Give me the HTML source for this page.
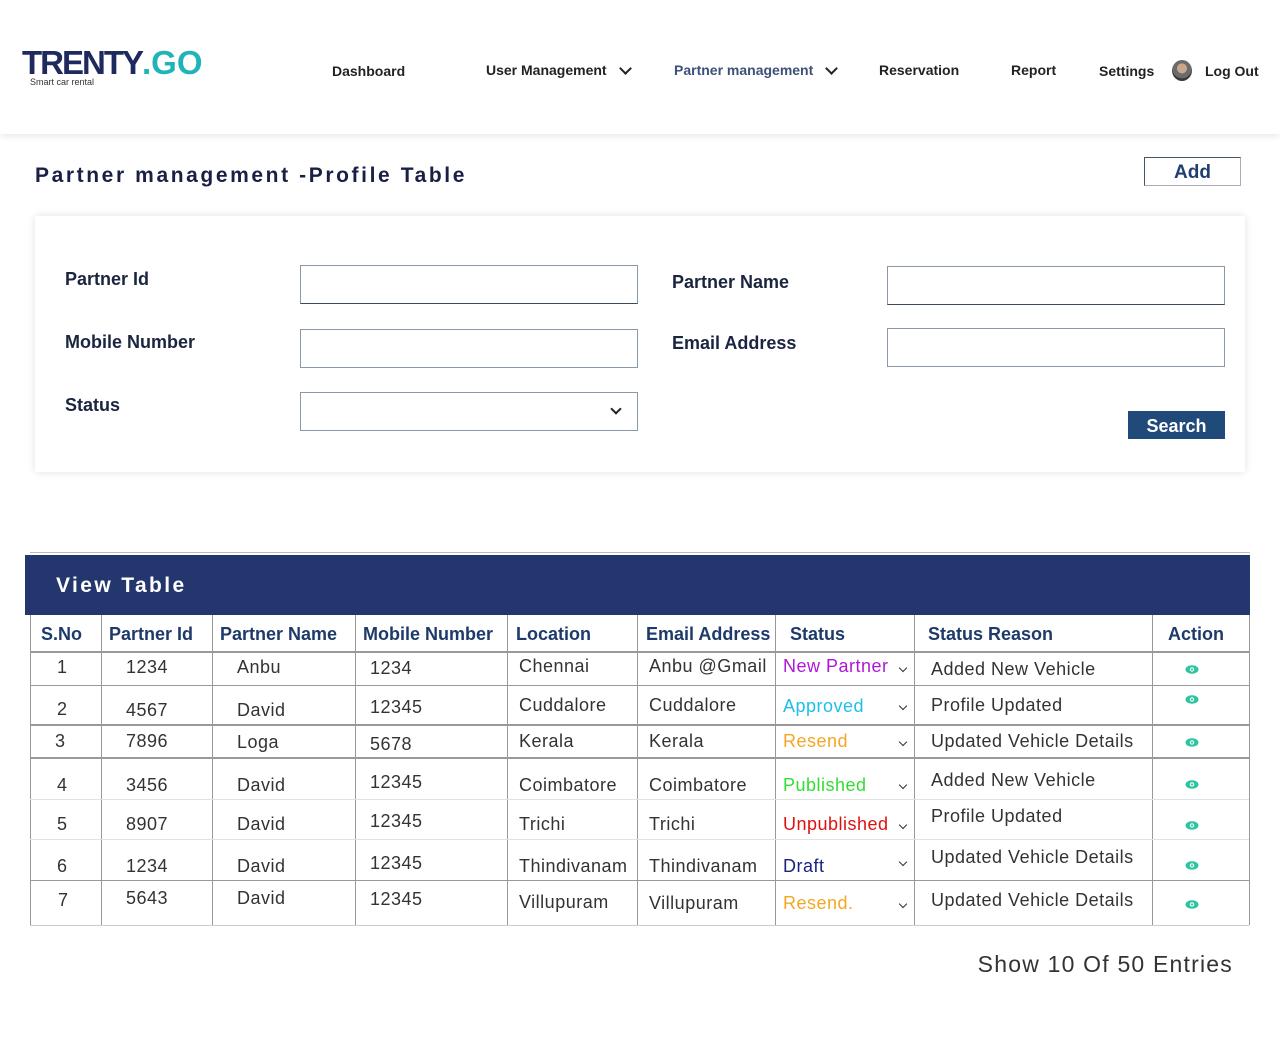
<!DOCTYPE html>
<html><head><meta charset="utf-8"><style>
body{margin:0;width:1280px;height:1040px;position:relative;background:#fff;font-family:"Liberation Sans",sans-serif;overflow:hidden}
.a{position:absolute;white-space:nowrap}
.hdr{position:absolute;left:0;top:0;width:1280px;height:134px;background:#fff;box-shadow:0 3px 6px rgba(0,0,0,0.08)}
.nav{position:absolute;font-size:14px;font-weight:bold;color:#222;line-height:16px}
.chev{display:inline-block;width:7px;height:7px;border-right:2px solid #222;border-bottom:2px solid #222;transform:rotate(45deg);position:absolute}
.lbl{position:absolute;font-size:18px;font-weight:bold;color:#1a2540;line-height:20px}
.inp{position:absolute;width:336px;height:37px;border:1px solid #8a99a8;background:#fff}
.h{position:absolute;font-size:18px;font-weight:bold;color:#1e3a6b;line-height:20px;top:624px}
.t{position:absolute;font-size:18px;color:#333;line-height:20px;white-space:nowrap;letter-spacing:0.5px}
.vl{position:absolute;width:1px;background:#999;top:615px;height:310px}
.hl{position:absolute;left:30px;width:1219px;height:1px;background:#999}
.sc{position:absolute;width:5px;height:5px;border-right:1.5px solid #333;border-bottom:1.5px solid #333;transform:rotate(45deg);left:900px}
.eye{position:absolute;left:1185px;width:14px;height:9px}
</style></head><body>
<div class="hdr"></div>
<div class="a" style="left:22px;top:44px;font-size:33px;font-weight:bold;letter-spacing:-2px;color:#1e2a5e">TRENTY<span style="color:#1fb5b8;letter-spacing:0px">.GO</span></div>
<div class="a" style="left:30px;top:77px;font-size:9px;color:#333">Smart car rental</div>
<div class="nav" style="left:332px;top:63px">Dashboard</div>
<div class="nav" style="left:486px;top:62px">User Management</div>
<span class="chev" style="left:621px;top:64px"></span>
<div class="nav" style="left:674px;top:62px;color:#3c5078">Partner management</div>
<span class="chev" style="left:827px;top:64px"></span>
<div class="nav" style="left:879px;top:62px">Reservation</div>
<div class="nav" style="left:1011px;top:62px">Report</div>
<div class="nav" style="left:1099px;top:63px">Settings</div>
<div class="a" style="left:1172px;top:60px;width:20px;height:21px;border-radius:50%;background:radial-gradient(circle at 50% 40%,#c9a58c 0 30%,#6b6b6b 32% 60%,#3a3a3a 62%)"></div>
<div class="nav" style="left:1205px;top:63px">Log Out</div>

<div class="a" style="left:35px;top:164px;font-size:21px;font-weight:bold;letter-spacing:2.6px;color:#1a1f45">Partner management -Profile Table</div>
<div class="a" style="left:1144px;top:157px;width:95px;height:27px;border:1px solid #445566;border-right-color:#aab;border-bottom-color:#aab;text-align:center;font-size:19px;font-weight:bold;color:#1f3f6e;line-height:30px">Add</div>

<div class="a" style="left:35px;top:216px;width:1210px;height:256px;background:#fff;box-shadow:0 0 8px rgba(0,0,0,0.12)"></div>
<div class="lbl" style="left:65px;top:269px">Partner Id</div>
<div class="lbl" style="left:65px;top:332px">Mobile Number</div>
<div class="lbl" style="left:65px;top:395px">Status</div>
<div class="lbl" style="left:672px;top:272px">Partner Name</div>
<div class="lbl" style="left:672px;top:333px">Email Address</div>
<div class="inp" style="left:300px;top:265px;border-bottom-color:#3a4a5a"></div>
<div class="inp" style="left:300px;top:329px"></div>
<div class="inp" style="left:300px;top:392px"></div>
<span class="chev" style="left:612px;top:405px;width:6px;height:6px"></span>
<div class="inp" style="left:887px;top:266px;border-bottom-color:#3a4a5a"></div>
<div class="inp" style="left:887px;top:328px"></div>
<div class="a" style="left:1128px;top:411px;width:97px;height:28px;background:#1f4a7a;color:#fff;font-size:18px;font-weight:bold;text-align:center;line-height:31px">Search</div>

<div class="a" style="left:30px;top:552px;width:1220px;height:1px;background:#bbb"></div>
<div class="a" style="left:25px;top:555px;width:1225px;height:60px;background:#24366e"></div>
<div class="a" style="left:56px;top:574px;font-size:21px;font-weight:bold;letter-spacing:2.4px;color:#fff">View Table</div>

<div class="vl" style="left:30px"></div><div class="vl" style="left:101px"></div><div class="vl" style="left:212px"></div><div class="vl" style="left:355px"></div><div class="vl" style="left:507px"></div><div class="vl" style="left:637px"></div><div class="vl" style="left:775px"></div><div class="vl" style="left:914px"></div><div class="vl" style="left:1152px"></div><div class="vl" style="left:1249px"></div>
<div class="hl" style="top:651px;height:2px"></div>
<div class="hl" style="top:685px"></div>
<div class="hl" style="top:724px;height:2px"></div>
<div class="hl" style="top:757px;height:2px"></div>
<div class="hl" style="top:799px;background:#e2e2e2"></div>
<div class="hl" style="top:839px;background:#e2e2e2"></div>
<div class="hl" style="top:880px"></div>
<div class="hl" style="top:925px;background:#ccc"></div>

<div class="h" style="left:41px">S.No</div>
<div class="h" style="left:109px">Partner Id</div>
<div class="h" style="left:220px">Partner Name</div>
<div class="h" style="left:363px">Mobile Number</div>
<div class="h" style="left:516px">Location</div>
<div class="h" style="left:646px">Email Address</div>
<div class="h" style="left:790px">Status</div>
<div class="h" style="left:928px">Status Reason</div>
<div class="h" style="left:1168px">Action</div>

<div class="t" style="left:57px;top:657px">1</div><div class="t" style="left:126px;top:657px">1234</div><div class="t" style="left:237px;top:657px">Anbu</div><div class="t" style="left:370px;top:658px">1234</div><div class="t" style="left:519px;top:656px">Chennai</div><div class="t" style="left:649px;top:656px">Anbu @Gmail</div><div class="t" style="left:783px;top:656px;color:#b016d8">New Partner</div><span class="sc" style="top:665px"></span><div class="t" style="left:931px;top:659px">Added New Vehicle</div>
<div class="t" style="left:57px;top:699px">2</div><div class="t" style="left:126px;top:700px">4567</div><div class="t" style="left:237px;top:700px">David</div><div class="t" style="left:370px;top:697px">12345</div><div class="t" style="left:519px;top:695px">Cuddalore</div><div class="t" style="left:649px;top:695px">Cuddalore</div><div class="t" style="left:783px;top:696px;color:#1ec0e8">Approved</div><span class="sc" style="top:703px"></span><div class="t" style="left:931px;top:695px">Profile Updated</div>
<div class="t" style="left:55px;top:731px">3</div><div class="t" style="left:126px;top:731px">7896</div><div class="t" style="left:237px;top:732px">Loga</div><div class="t" style="left:370px;top:734px">5678</div><div class="t" style="left:519px;top:731px">Kerala</div><div class="t" style="left:649px;top:731px">Kerala</div><div class="t" style="left:783px;top:731px;color:#f5a623">Resend</div><span class="sc" style="top:739px"></span><div class="t" style="left:931px;top:731px">Updated Vehicle Details</div>
<div class="t" style="left:57px;top:775px">4</div><div class="t" style="left:126px;top:775px">3456</div><div class="t" style="left:237px;top:775px">David</div><div class="t" style="left:370px;top:772px">12345</div><div class="t" style="left:519px;top:775px">Coimbatore</div><div class="t" style="left:649px;top:775px">Coimbatore</div><div class="t" style="left:783px;top:775px;color:#33dd33">Published</div><span class="sc" style="top:782px"></span><div class="t" style="left:931px;top:770px">Added New Vehicle</div>
<div class="t" style="left:57px;top:814px">5</div><div class="t" style="left:126px;top:814px">8907</div><div class="t" style="left:237px;top:814px">David</div><div class="t" style="left:370px;top:811px">12345</div><div class="t" style="left:519px;top:814px">Trichi</div><div class="t" style="left:649px;top:814px">Trichi</div><div class="t" style="left:783px;top:814px;color:#e01010">Unpublished</div><span class="sc" style="top:822px"></span><div class="t" style="left:931px;top:806px">Profile Updated</div>
<div class="t" style="left:57px;top:856px">6</div><div class="t" style="left:126px;top:856px">1234</div><div class="t" style="left:237px;top:856px">David</div><div class="t" style="left:370px;top:853px">12345</div><div class="t" style="left:519px;top:856px">Thindivanam</div><div class="t" style="left:649px;top:856px">Thindivanam</div><div class="t" style="left:783px;top:856px;color:#1a237e">Draft</div><span class="sc" style="top:859px"></span><div class="t" style="left:931px;top:847px">Updated Vehicle Details</div>
<div class="t" style="left:58px;top:890px">7</div><div class="t" style="left:126px;top:888px">5643</div><div class="t" style="left:237px;top:888px">David</div><div class="t" style="left:370px;top:889px">12345</div><div class="t" style="left:519px;top:892px">Villupuram</div><div class="t" style="left:649px;top:893px">Villupuram</div><div class="t" style="left:783px;top:893px;color:#f5a623">Resend.</div><span class="sc" style="top:901px"></span><div class="t" style="left:931px;top:890px">Updated Vehicle Details</div>

<svg class="eye" style="top:665px" viewBox="0 0 14 9"><ellipse cx="7" cy="4.5" rx="6.5" ry="4.2" fill="#2ec4a0"/><circle cx="7" cy="4.5" r="2.2" fill="#fff"/><circle cx="7" cy="4.5" r="1.1" fill="#2ec4a0"/></svg>
<svg class="eye" style="top:695px" viewBox="0 0 14 9"><ellipse cx="7" cy="4.5" rx="6.5" ry="4.2" fill="#2ec4a0"/><circle cx="7" cy="4.5" r="2.2" fill="#fff"/><circle cx="7" cy="4.5" r="1.1" fill="#2ec4a0"/></svg>
<svg class="eye" style="top:738px" viewBox="0 0 14 9"><ellipse cx="7" cy="4.5" rx="6.5" ry="4.2" fill="#2ec4a0"/><circle cx="7" cy="4.5" r="2.2" fill="#fff"/><circle cx="7" cy="4.5" r="1.1" fill="#2ec4a0"/></svg>
<svg class="eye" style="top:780px" viewBox="0 0 14 9"><ellipse cx="7" cy="4.5" rx="6.5" ry="4.2" fill="#2ec4a0"/><circle cx="7" cy="4.5" r="2.2" fill="#fff"/><circle cx="7" cy="4.5" r="1.1" fill="#2ec4a0"/></svg>
<svg class="eye" style="top:821px" viewBox="0 0 14 9"><ellipse cx="7" cy="4.5" rx="6.5" ry="4.2" fill="#2ec4a0"/><circle cx="7" cy="4.5" r="2.2" fill="#fff"/><circle cx="7" cy="4.5" r="1.1" fill="#2ec4a0"/></svg>
<svg class="eye" style="top:861px" viewBox="0 0 14 9"><ellipse cx="7" cy="4.5" rx="6.5" ry="4.2" fill="#2ec4a0"/><circle cx="7" cy="4.5" r="2.2" fill="#fff"/><circle cx="7" cy="4.5" r="1.1" fill="#2ec4a0"/></svg>
<svg class="eye" style="top:900px" viewBox="0 0 14 9"><ellipse cx="7" cy="4.5" rx="6.5" ry="4.2" fill="#2ec4a0"/><circle cx="7" cy="4.5" r="2.2" fill="#fff"/><circle cx="7" cy="4.5" r="1.1" fill="#2ec4a0"/></svg>

<div class="a" style="right:47px;top:951px;font-size:23px;color:#333;letter-spacing:1.2px">Show 10 Of 50 Entries</div>
</body></html>
